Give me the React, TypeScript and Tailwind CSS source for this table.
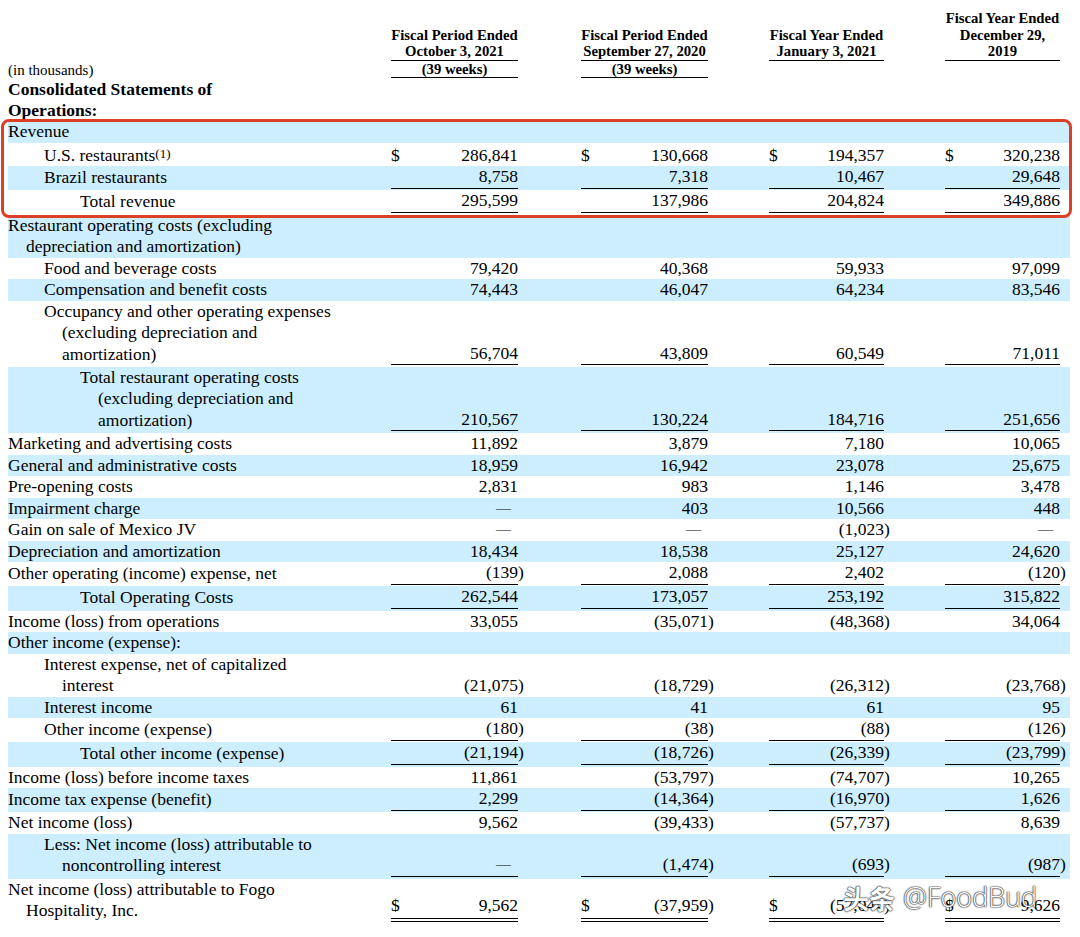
import clsx from "clsx";

type Row = {
  lines: string[];
  level: number;
  blue?: boolean;
  vals?: string[];
  dollar?: boolean;
  line?: "single" | "double";
  sup?: string;
};

const cols = [
  { w: "w-[127px]", gap: "w-[63px]" },
  { w: "w-[127px]", gap: "w-[61px]" },
  { w: "w-[115px]", gap: "w-[61px]" },
  { w: "w-[115px]", gap: "w-[10px]" },
];

const revenueRows: Row[] = [
  { lines: ["Revenue"], level: 0, blue: true },
  { lines: ["U.S. restaurants"], sup: "(1)", level: 1, dollar: true, vals: ["286,841", "130,668", "194,357", "320,238"] },
  { lines: ["Brazil restaurants"], level: 1, blue: true, line: "single", vals: ["8,758", "7,318", "10,467", "29,648"] },
  { lines: ["Total revenue"], level: 2, line: "single", vals: ["295,599", "137,986", "204,824", "349,886"] },
];

const rows: Row[] = [
  { lines: ["Restaurant operating costs (excluding", "depreciation and amortization)"], level: 0, blue: true },
  { lines: ["Food and beverage costs"], level: 1, vals: ["79,420", "40,368", "59,933", "97,099"] },
  { lines: ["Compensation and benefit costs"], level: 1, blue: true, vals: ["74,443", "46,047", "64,234", "83,546"] },
  {
    lines: ["Occupancy and other operating expenses", "(excluding depreciation and", "amortization)"],
    level: 1,
    line: "single",
    vals: ["56,704", "43,809", "60,549", "71,011"],
  },
  {
    lines: ["Total restaurant operating costs", "(excluding depreciation and", "amortization)"],
    level: 2,
    blue: true,
    line: "single",
    vals: ["210,567", "130,224", "184,716", "251,656"],
  },
  { lines: ["Marketing and advertising costs"], level: 0, vals: ["11,892", "3,879", "7,180", "10,065"] },
  { lines: ["General and administrative costs"], level: 0, blue: true, vals: ["18,959", "16,942", "23,078", "25,675"] },
  { lines: ["Pre-opening costs"], level: 0, vals: ["2,831", "983", "1,146", "3,478"] },
  { lines: ["Impairment charge"], level: 0, blue: true, vals: ["—", "403", "10,566", "448"] },
  { lines: ["Gain on sale of Mexico JV"], level: 0, vals: ["—", "—", "(1,023)", "—"] },
  { lines: ["Depreciation and amortization"], level: 0, blue: true, vals: ["18,434", "18,538", "25,127", "24,620"] },
  { lines: ["Other operating (income) expense, net"], level: 0, line: "single", vals: ["(139)", "2,088", "2,402", "(120)"] },
  { lines: ["Total Operating Costs"], level: 2, blue: true, line: "single", vals: ["262,544", "173,057", "253,192", "315,822"] },
  { lines: ["Income (loss) from operations"], level: 0, vals: ["33,055", "(35,071)", "(48,368)", "34,064"] },
  { lines: ["Other income (expense):"], level: 0, blue: true },
  { lines: ["Interest expense, net of capitalized", "interest"], level: 1, vals: ["(21,075)", "(18,729)", "(26,312)", "(23,768)"] },
  { lines: ["Interest income"], level: 1, blue: true, vals: ["61", "41", "61", "95"] },
  { lines: ["Other income (expense)"], level: 1, line: "single", vals: ["(180)", "(38)", "(88)", "(126)"] },
  { lines: ["Total other income (expense)"], level: 2, blue: true, line: "single", vals: ["(21,194)", "(18,726)", "(26,339)", "(23,799)"] },
  { lines: ["Income (loss) before income taxes"], level: 0, vals: ["11,861", "(53,797)", "(74,707)", "10,265"] },
  { lines: ["Income tax expense (benefit)"], level: 0, blue: true, line: "single", vals: ["2,299", "(14,364)", "(16,970)", "1,626"] },
  { lines: ["Net income (loss)"], level: 0, vals: ["9,562", "(39,433)", "(57,737)", "8,639"] },
  {
    lines: ["Less: Net income (loss) attributable to", "noncontrolling interest"],
    level: 1,
    blue: true,
    line: "single",
    vals: ["—", "(1,474)", "(693)", "(987)"],
  },
  {
    lines: ["Net income (loss) attributable to Fogo", "Hospitality, Inc."],
    level: 0,
    dollar: true,
    line: "double",
    vals: ["9,562", "(37,959)", "(57,044)", "9,626"],
  },
];

const firstIndent = ["pl-0", "pl-[36px]", "pl-[72px]"];
const nextIndent = ["pl-[18px]", "pl-[54px]", "pl-[90px]"];

function StatementRow({ row }: { row: Row }) {
  return (
    <div
      className={clsx(
        "flex items-end",
        row.blue && "bg-[#cceeff]",
        row.line === "single" && "pb-[1.75px]"
      )}
    >
      <div className="w-[383px] shrink-0">
        {row.lines.map((l, i) => (
          <div key={i} className={clsx("whitespace-nowrap", i === 0 ? firstIndent[row.level] : nextIndent[row.level])}>
            {l}
            {i === 0 && row.sup && <span className="text-[13px] [vertical-align:3px]">{row.sup}</span>}
          </div>
        ))}
      </div>
      {row.vals &&
        cols.map((c, i) => {
          const v = row.vals![i];
          const neg = v.startsWith("(");
          const num = neg ? v.slice(0, -1) : v;
          return (
            <div key={i} className="flex items-end">
              <div
                className={clsx(
                  c.w,
                  "flex shrink-0 justify-between",
                  row.line === "single" && "border-b border-black",
                  row.line === "double" && "border-b-[4px] border-double border-black pb-[1px]"
                )}
              >
                <span>{row.dollar ? "$" : ""}</span>
                <span className={num === "—" ? "pr-[7px] text-[15px]" : ""}>{num}</span>
              </div>
              <div className={clsx(c.gap, "shrink-0", row.line === "double" && "pb-[5px]", row.line === "single" && "pb-[1px]")}>
                {neg ? ")" : ""}
              </div>
            </div>
          );
        })}
    </div>
  );
}

function HeadCell({ lines, w, rule = true }: { lines: string[]; w: string; rule?: boolean }) {
  return (
    <div className={clsx(w, "shrink-0 text-center", rule && "border-b border-black")}>
      {lines.map((l) => (
        <div key={l}>{l}</div>
      ))}
    </div>
  );
}

export default function App() {
  return (
    <div className="relative min-h-[937px] w-[1080px] bg-white text-black [font-family:'Liberation_Serif','Times_New_Roman',serif]">
      <div className="w-[1070px] pl-[8px] pt-[10px]">
        {/* column headings */}
        <div className="flex items-end text-[14.7px] font-bold leading-[16.5px]">
          <div className="w-[383px] shrink-0" />
          <HeadCell w="w-[127px]" lines={["Fiscal Period Ended", "October 3, 2021"]} />
          <div className="w-[63px] shrink-0" />
          <HeadCell w="w-[127px]" lines={["Fiscal Period Ended", "September 27, 2020"]} />
          <div className="w-[61px] shrink-0" />
          <HeadCell w="w-[115px]" lines={["Fiscal Year Ended", "January 3, 2021"]} />
          <div className="w-[61px] shrink-0" />
          <HeadCell w="w-[115px]" lines={["Fiscal Year Ended", "December 29,", "2019"]} />
        </div>
        <div className="flex items-end leading-[16.5px]">
          <div className="w-[383px] shrink-0 text-[15px]">(in thousands)</div>
          <div className="text-[14.7px] font-bold">
            <HeadCell w="w-[127px]" lines={["(39 weeks)"]} />
          </div>
          <div className="w-[63px] shrink-0" />
          <div className="text-[14.7px] font-bold">
            <HeadCell w="w-[127px]" lines={["(39 weeks)"]} />
          </div>
        </div>
        <div className="pt-[1px] text-[17.5px] font-bold leading-[21px]">
          <div>Consolidated Statements of</div>
          <div>Operations:</div>
        </div>

        <div className="text-[17.5px] leading-[21.5px]">
          <div className="relative">
            {revenueRows.map((r, i) => (
              <StatementRow key={i} row={r} />
            ))}
            <div className="pointer-events-none absolute -top-[2px] -bottom-[3px] -left-[7px] -right-[2px] rounded-[8px] border-[3px] border-[#dc3f26]" />
          </div>
          {rows.map((r, i) => (
            <StatementRow key={i} row={r} />
          ))}
        </div>
      </div>

      {/* watermark */}
      <div className="absolute left-[843px] top-[877px] flex items-center gap-[8px] text-white [text-shadow:0_0_1px_#222,0_0_1px_#222,0_0_2px_#333]">
        <span className="text-[26px] font-bold [font-family:'Noto_Sans_CJK_SC',sans-serif]">头条</span>
        <span className="text-[27px] font-light [font-family:'Open_Sans',sans-serif]">@FoodBud</span>
      </div>
    </div>
  );
}
